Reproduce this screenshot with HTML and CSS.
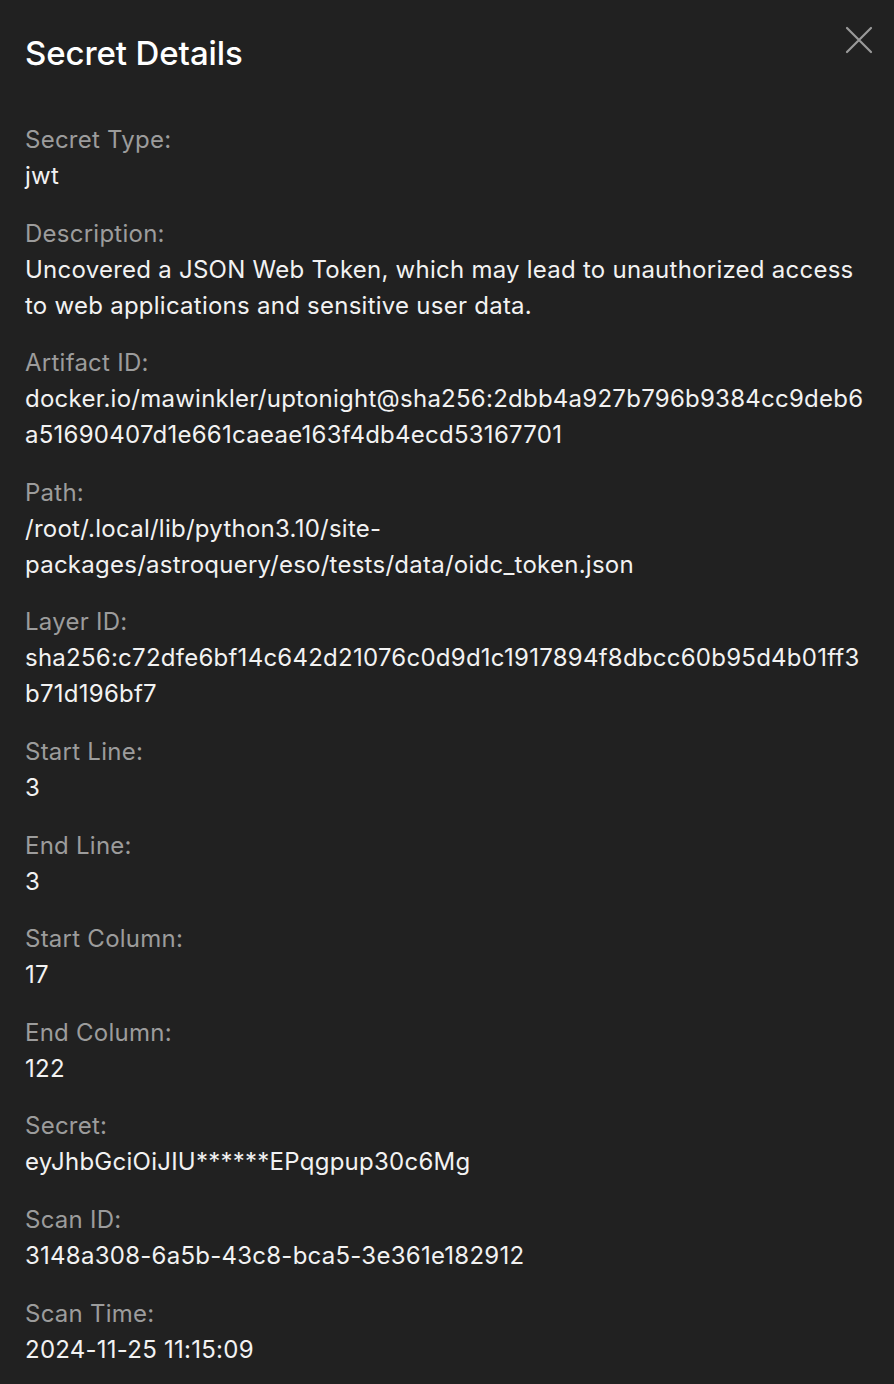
FILE: index.html
```html
<!DOCTYPE html>
<html>
<head>
<meta charset="utf-8">
<link rel="stylesheet" href="styles.css">
</head>
<body>
<div class="panel">
  <header class="head">
    <h1 class="title">Secret Details</h1>
    <button class="close" aria-label="Close">
      <svg width="28" height="28" viewBox="0 0 28 28"><path d="M2 2 L26 26 M26 2 L2 26" stroke="#9a9a9a" stroke-width="2.2" stroke-linecap="round"/></svg>
    </button>
  </header>
  <dl class="list">
    <div class="row"><dt>Secret Type:</dt><dd>jwt</dd></div>
    <div class="row"><dt>Description:</dt><dd>Uncovered a JSON Web Token, which may lead to unauthorized access to web applications and sensitive user data.</dd></div>
    <div class="row"><dt>Artifact ID:</dt><dd>docker.io/mawinkler/uptonight@sha256:2dbb4a927b796b9384cc9deb6a51690407d1e661caeae163f4db4ecd53167701</dd></div>
    <div class="row"><dt>Path:</dt><dd>/root/.local/lib/python3.10/site-packages/astroquery/eso/tests/data/oidc_token.json</dd></div>
    <div class="row"><dt>Layer ID:</dt><dd>sha256:c72dfe6bf14c642d21076c0d9d1c1917894f8dbcc60b95d4b01ff3b71d196bf7</dd></div>
    <div class="row"><dt>Start Line:</dt><dd>3</dd></div>
    <div class="row"><dt>End Line:</dt><dd>3</dd></div>
    <div class="row"><dt>Start Column:</dt><dd>17</dd></div>
    <div class="row"><dt>End Column:</dt><dd>122</dd></div>
    <div class="row"><dt>Secret:</dt><dd>eyJhbGciOiJIU******EPqgpup30c6Mg</dd></div>
    <div class="row"><dt>Scan ID:</dt><dd>3148a308-6a5b-43c8-bca5-3e361e182912</dd></div>
    <div class="row"><dt>Scan Time:</dt><dd>2024-11-25 11:15:09</dd></div>
  </dl>
</div>
</body>
</html>
```
FILE: styles.css
```css
html, body {
  margin: 0;
  padding: 0;
  background: #212121;
}
body {
  font-family: Inter, "Noto Sans", sans-serif;
  color: #f2f2f2;
  width: 894px;
  height: 1384px;
  overflow: hidden;
}
.panel {
  padding: 30px 22px 0 25px;
}
.head {
  display: flex;
  justify-content: space-between;
  align-items: flex-start;
}
.title {
  margin: 0;
  font-size: 33px;
  font-weight: 500;
  line-height: 46px;
  color: #ffffff;
  letter-spacing: -0.1px;
}
.close {
  background: none;
  border: 0;
  padding: 0;
  margin: -4px -1px 0 0;
  cursor: pointer;
  display: block;
}
.close svg { display: block; }
.list {
  margin: 46px 0 0 0;
  display: flex;
  flex-direction: column;
  gap: 21.6px;
}
.row dt, .row dd {
  font-size: 24px;
  line-height: 36px;
  letter-spacing: 0.25px;
}
.row dt {
  color: #9c9c9c;
}
.row dd {
  margin: 0;
  color: #f2f2f2;
  overflow-wrap: anywhere;
}
```
